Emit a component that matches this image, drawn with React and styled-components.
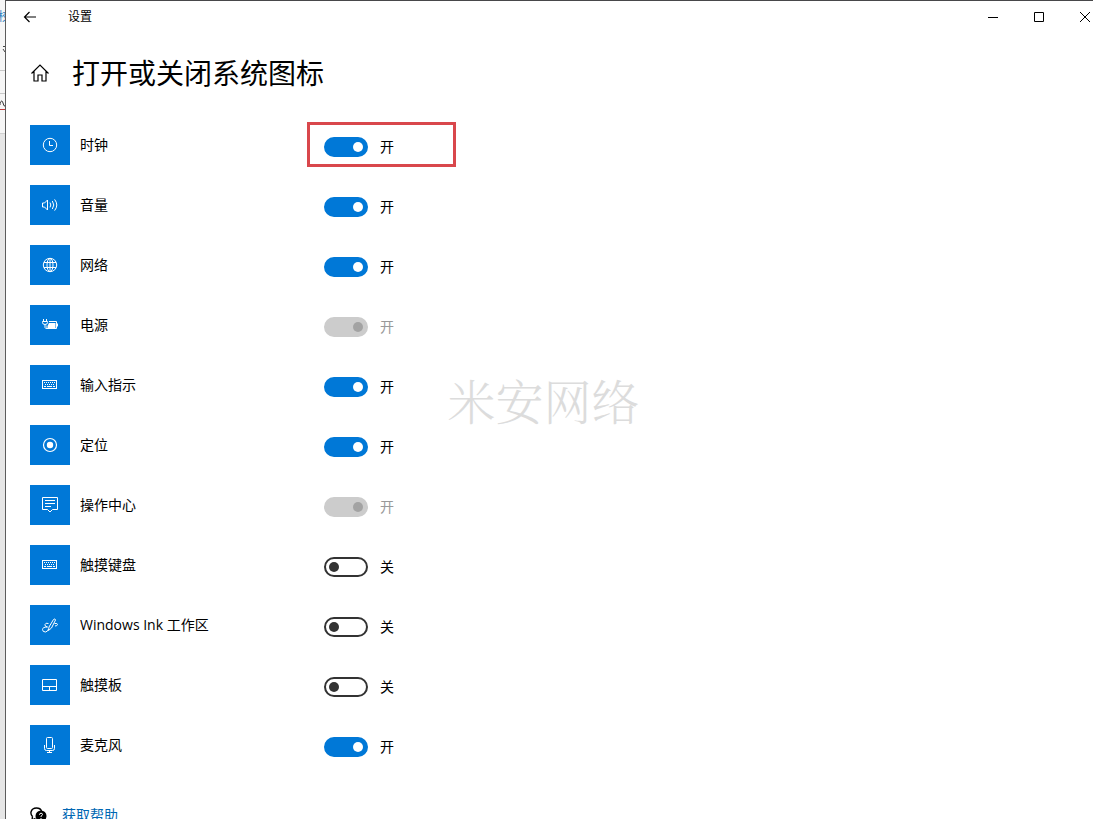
import React from "react";
import styled, { createGlobalStyle, css } from "styled-components";

const GlobalStyle = createGlobalStyle`
  * { box-sizing: border-box; }
  body {
    margin: 0;
    background: #fff;
    color: #000;
    font-family: "Open Sans", "Noto Sans CJK SC", sans-serif;
    font-size: 14px;
  }
`;

const Desktop = styled.div`
  position: relative;
  display: flex;
  height: 100vh;
  overflow: hidden;
`;

const Behind = styled.div`
  flex: none;
  width: 5px;
  overflow: hidden;
  background: #e6e6e6;
`;

const BehindPane = styled.div`
  display: flex;
  flex-direction: column;
  gap: 16px;
  height: ${(p) => p.$height}px;
  padding-top: ${(p) => p.$top || 0}px;
  overflow: hidden;
  background: #f6f6f6;
  border-bottom: 1px solid ${(p) => p.$line};
  color: #2f7fc0;
  font-size: 12px;
  line-height: 16px;
`;

const BehindText = styled.span`
  width: 12px;
  margin-left: -2px;
`;

const Window = styled.div`
  flex: 1;
  min-width: 0;
  display: flex;
  flex-direction: column;
  border-top: 1px solid #48484a;
  border-left: 1px solid #5c5c5c;
  background: #fff;
  overflow: hidden;
`;

const TitleBar = styled.header`
  flex: none;
  display: flex;
  align-items: center;
  height: 32px;
  margin-right: -15px;
`;

const BarButton = styled.button`
  display: flex;
  align-items: center;
  justify-content: center;
  width: ${(p) => p.$width || 46}px;
  height: 32px;
  padding: 0;
  border: 0;
  background: none;
  color: #000;
`;

const AppName = styled.span`
  flex: 1;
  padding-left: 14px;
  font-size: 12px;
  line-height: 16px;
`;

const Content = styled.main`
  flex: 1;
  min-height: 0;
  padding: 20px 24px 0;
  overflow-y: auto;
  scrollbar-width: none;
`;

const Heading = styled.div`
  display: flex;
  align-items: center;
  height: 40px;
  margin-bottom: 22px;
`;

const HomeButton = styled.button`
  display: flex;
  width: 20px;
  margin-right: 22px;
  padding: 0;
  border: 0;
  background: none;
  color: #000;
`;

const Title = styled.h1`
  margin: 0;
  font-size: 28px;
  font-weight: 400;
  line-height: 40px;
`;

const List = styled.ul`
  margin: 0;
  padding: 0;
  list-style: none;
`;

const Row = styled.li`
  display: grid;
  grid-template-columns: 40px 237px 149px;
  align-items: center;
  height: 60px;
`;

const Tile = styled.span`
  display: flex;
  align-items: center;
  justify-content: center;
  height: 40px;
  background: #0078d7;
  color: #fff;
`;

const Name = styled.label`
  padding-left: 10px;
  line-height: 20px;
`;

const Control = styled.div`
  align-self: start;
  display: flex;
  align-items: center;
  gap: 12px;
  height: 45px;
  margin-top: 7px;
  padding: 5px 0 0 14px;
  border: 3px solid ${(p) => (p.$marked ? "#d9474c" : "transparent")};
`;

const Switch = styled.input`
  appearance: none;
  display: flex;
  align-items: center;
  width: 44px;
  height: 20px;
  margin: 0;
  padding: 0 3px;
  border: 2px solid #333;
  border-radius: 10px;
  background: #fff;

  &::before {
    content: "";
    width: 10px;
    height: 10px;
    border-radius: 50%;
    background: #333;
  }

  &:checked {
    justify-content: flex-end;
    border-color: #0078d7;
    background: #0078d7;
  }

  &:checked::before {
    background: #fff;
  }

  ${(p) =>
    p.disabled &&
    css`
      &:checked {
        border-color: #ccc;
        background: #ccc;
      }
      &:checked::before {
        background: #a3a3a3;
      }
    `}
`;

const State = styled.span`
  line-height: 20px;
  color: ${(p) => (p.$muted ? "#999" : "#000")};
`;

const Help = styled.footer`
  display: flex;
  align-items: center;
  gap: 14px;
  margin-top: 30px;
`;

const HelpLink = styled.a`
  color: #0067b3;
  line-height: 20px;
  text-decoration: none;
`;

const Watermark = styled.div`
  position: absolute;
  inset: 0;
  display: flex;
  align-items: center;
  justify-content: center;
  padding: 0 6px 20px 0;
  color: #dcdcdc;
  font-family: "Noto Serif CJK SC", "Noto Sans CJK SC", serif;
  font-size: 48px;
  font-weight: 300;
  pointer-events: none;
`;

const Icon = ({ size = 20, children }) => (
  <svg
    width={size}
    height={size}
    viewBox={`0 0 ${size} ${size}`}
    fill="none"
    stroke="currentColor"
    strokeWidth="1"
    aria-hidden="true"
  >
    {children}
  </svg>
);

const Keyboard = () => (
  <Icon>
    <rect x="2.5" y="5.5" width="14" height="8" />
    <path d="M4 7.5h11M5 9.5h10" strokeDasharray="1 1" />
    <path d="M4 11.5h2M7 11.5h5M13 11.5h2" />
  </Icon>
);

const icons = {
  clock: (
    <Icon>
      <circle cx="10" cy="10" r="6.7" />
      <path d="M9.5 6v4.5H13" />
    </Icon>
  ),
  volume: (
    <Icon>
      <path d="M2.5 8v4h2l3 3V5l-3 3z" />
      <path d="M10 7.6q1.6 2.4 0 4.8M12.3 6q3 4 0 8M14.6 4.4q4.4 5.6 0 11.2" />
    </Icon>
  ),
  globe: (
    <Icon>
      <circle cx="10" cy="10" r="6.7" />
      <ellipse cx="10" cy="10" rx="3" ry="6.7" />
      <path d="M4 7.5h12M4 12.5h12M10 3.5v13" />
    </Icon>
  ),
  power: (
    <Icon>
      <path d="M3.5 4v2M6.5 4v2M2.500 6.500h5v1q0 2-2.500 2t-2.500-2zM5 9.500v3q0 1 2 1" />
      <path d="M9 6.500h7.500v7H7v-3M17.500 8.500v3" />
      <path d="M9 8h6.500v5H8v-3z" fill="currentColor" stroke="none" />
    </Icon>
  ),
  keyboard: <Keyboard />,
  location: (
    <Icon>
      <circle cx="10" cy="10" r="6.500" strokeWidth="1.200" />
      <circle cx="10" cy="10" r="3.200" fill="currentColor" stroke="none" />
    </Icon>
  ),
  action: (
    <Icon>
      <path d="M2.500 2.500h15v12h-5l-2.500 2.500-2.500-2.500h-5z" />
      <path d="M5 5.500h10M5 8.500h10M5 11.500h6" />
    </Icon>
  ),
  ink: (
    <Icon>
      <path d="M8.500 15.500l.5-3.500 4.500-7.500q1.500-1.500 2 .5L11.500 13z" />
      <path d="M8.500 8.500Q5.500 7.500 5 9.500t2.500 2.500Q2.500 12 2.500 14.500T5.500 17Q8 16.500 8.500 14" />
      <path d="M14.500 8.500q3.200-.5 3 1t-2.500 1.500" />
    </Icon>
  ),
  touchpad: (
    <Icon>
      <path d="M2.500 4.500h14v11h-14zM2.500 11.500h14M9.500 11.500v4" />
    </Icon>
  ),
  mic: (
    <Icon>
      <rect x="6.500" y="2.500" width="6" height="11" rx="1" />
      <path d="M4.500 10v3.500q0 2 2 2h6q2 0 2-2V10M9.500 15.500v2M7 17.500h5" />
    </Icon>
  ),
};

const items = [
  { id: "clock", icon: "clock", name: "时钟", on: true, marked: true },
  { id: "volume", icon: "volume", name: "音量", on: true },
  { id: "network", icon: "globe", name: "网络", on: true },
  { id: "power", icon: "power", name: "电源", on: true, disabled: true },
  { id: "input", icon: "keyboard", name: "输入指示", on: true },
  { id: "location", icon: "location", name: "定位", on: true },
  { id: "action", icon: "action", name: "操作中心", on: true, disabled: true },
  { id: "touch-keyboard", icon: "keyboard", name: "触摸键盘", on: false },
  { id: "ink", icon: "ink", name: "Windows Ink 工作区", on: false },
  { id: "touchpad", icon: "touchpad", name: "触摸板", on: false },
  { id: "mic", icon: "mic", name: "麦克风", on: true },
];

function SettingRow({ item }) {
  const [on, setOn] = React.useState(item.on);
  return (
    <Row>
      <Tile>{icons[item.icon]}</Tile>
      <Name htmlFor={item.id}>{item.name}</Name>
      <Control $marked={item.marked}>
        <Switch
          id={item.id}
          type="checkbox"
          checked={on}
          disabled={item.disabled}
          onChange={(e) => setOn(e.target.checked)}
        />
        <State $muted={item.disabled}>{on ? "开" : "关"}</State>
      </Control>
    </Row>
  );
}

export default function App() {
  return (
    <Desktop>
      <GlobalStyle />
      <Behind aria-hidden="true">
        <BehindPane $height={71} $top={9} $line="#c8c8c8">
          <BehindText>校</BehindText>
          <svg width="5" height="14" viewBox="0 0 5 14" fill="none" stroke="#444">
            <path d="M3 5.500h2M3 8l2 3" />
          </svg>
        </BehindPane>
        <BehindPane $height={23} $line="#c8c8c8" />
        <BehindPane $height={16} $line="#c03a3a">
          <svg width="5" height="15" viewBox="0 0 5 15" fill="none" stroke="#333">
            <path d="M0 11V9q2-4 3 0t2 3" />
          </svg>
        </BehindPane>
        <BehindPane $height={24} $line="#d0d0d0" />
      </Behind>
      <Window>
        <TitleBar>
          <BarButton $width={48} aria-label="返回">
            <Icon>
              <path d="M16 10H4.500M9.500 5L4.500 10l5 5" strokeWidth="1.200" />
            </Icon>
          </BarButton>
          <AppName>设置</AppName>
          <BarButton aria-label="最小化">
            <Icon size={10}>
              <path d="M0 5.500h10" />
            </Icon>
          </BarButton>
          <BarButton aria-label="最大化">
            <Icon size={10}>
              <path d="M.5.5h9v9h-9z" />
            </Icon>
          </BarButton>
          <BarButton aria-label="关闭">
            <Icon size={10}>
              <path d="M0 0l10 10M10 0L0 10" />
            </Icon>
          </BarButton>
        </TitleBar>
        <Content>
          <Heading>
            <HomeButton aria-label="主页">
              <Icon>
                <path
                  d="M1.500 10.500L10 2l8.500 8.500M4 8.500v9.500h4v-6h4v6h4V8.500"
                  strokeWidth="1.200"
                />
              </Icon>
            </HomeButton>
            <Title>打开或关闭系统图标</Title>
          </Heading>
          <List>
            {items.map((item) => (
              <SettingRow key={item.id} item={item} />
            ))}
          </List>
          <Help>
            <Icon size={18}>
              <path d="M2.500 10.500Q.5 8.500 1 6q1-4 5.500-4 4 0 5 3M2.500 10.500l-.5 3.500 3.500-1.500" strokeWidth="1.400" />
              <circle cx="11" cy="10" r="5.500" fill="currentColor" stroke="none" />
              <path d="M12.500 14l3.500 2-.5-4z" fill="currentColor" stroke="none" />
              <path d="M9.500 8.800q0-1.600 1.500-1.600t1.500 1.300q0 .8-1.500 1.700v.8M11 12v1.200" stroke="#fff" />
            </Icon>
            <HelpLink href="#help">获取帮助</HelpLink>
          </Help>
        </Content>
      </Window>
      <Watermark aria-hidden="true">米安网络</Watermark>
    </Desktop>
  );
}
